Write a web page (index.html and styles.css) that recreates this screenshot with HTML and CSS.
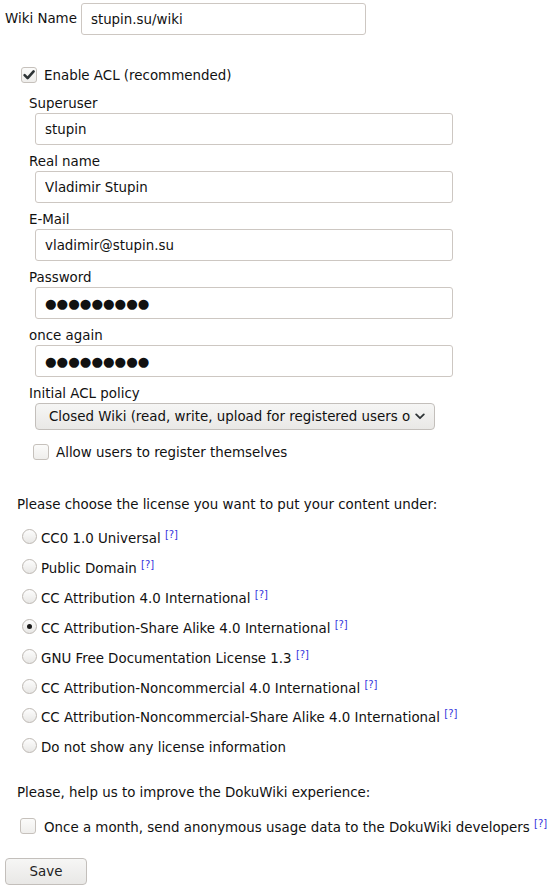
FILE: index.html
```html
<!DOCTYPE html>
<html lang="en">
<head>
<meta charset="utf-8">
<title>DokuWiki Installer</title>
<link rel="stylesheet" href="styles.css">
</head>
<body>
<form class="page">
  <div class="title-row">
    <label class="title-label" for="title">Wiki Name</label>
    <input class="field field-title" id="title" type="text" value="stupin.su/wiki">
  </div>

  <div class="acl">
    <label class="check-line acl-toggle">
      <span class="cb is-checked"><svg viewBox="0 0 16 16" width="16" height="16"><path d="M3.6 8.2 L6.6 11.2 L12.6 4.4" fill="none" stroke="#2e3436" stroke-width="2.6" stroke-linecap="round" stroke-linejoin="round"/></svg></span>
      <span>Enable ACL (recommended)</span>
    </label>
    <div class="acl-fields">
      <label class="lbl">Superuser</label>
      <input class="field" type="text" value="stupin">
      <label class="lbl">Real name</label>
      <input class="field" type="text" value="Vladimir Stupin">
      <label class="lbl">E-Mail</label>
      <input class="field" type="text" value="vladimir@stupin.su">
      <label class="lbl">Password</label>
      <input class="field field-pass" type="text" value="●●●●●●●●●">
      <label class="lbl">once again</label>
      <input class="field field-pass" type="text" value="●●●●●●●●●">
      <label class="lbl">Initial ACL policy</label>
      <div class="select">
        <span class="select-text">Closed Wiki (read, write, upload for registered users only)</span>
        <svg class="chev" viewBox="0 0 10 7" width="10" height="7"><path d="M1.2 1.4 L5 5.2 L8.8 1.4" fill="none" stroke="#2e3436" stroke-width="1.8" stroke-linecap="round" stroke-linejoin="round"/></svg>
      </div>
      <label class="check-line allow">
        <span class="cb"></span>
        <span>Allow users to register themselves</span>
      </label>
    </div>
  </div>

  <p class="para para-license">Please choose the license you want to put your content under:</p>

  <div class="licenses">
    <label class="radio-line"><span class="radio"></span><span>CC0 1.0 Universal <sup class="help">[?]</sup></span></label>
    <label class="radio-line"><span class="radio"></span><span>Public Domain <sup class="help">[?]</sup></span></label>
    <label class="radio-line"><span class="radio"></span><span>CC Attribution 4.0 International <sup class="help">[?]</sup></span></label>
    <label class="radio-line"><span class="radio is-checked"></span><span>CC Attribution-Share Alike 4.0 International <sup class="help">[?]</sup></span></label>
    <label class="radio-line"><span class="radio"></span><span>GNU Free Documentation License 1.3 <sup class="help">[?]</sup></span></label>
    <label class="radio-line"><span class="radio"></span><span>CC Attribution-Noncommercial 4.0 International <sup class="help">[?]</sup></span></label>
    <label class="radio-line"><span class="radio"></span><span>CC Attribution-Noncommercial-Share Alike 4.0 International <sup class="help">[?]</sup></span></label>
    <label class="radio-line"><span class="radio"></span><span>Do not show any license information</span></label>
  </div>

  <p class="para para-help">Please, help us to improve the DokuWiki experience:</p>

  <label class="check-line pop">
    <span class="cb"></span>
    <span>Once a month, send anonymous usage data to the DokuWiki developers <sup class="help">[?]</sup></span>
  </label>

  <div class="actions">
    <button class="btn" type="button">Save</button>
  </div>
</form>
</body>
</html>
```

FILE: styles.css
```css
html, body {
  margin: 0;
  padding: 0;
  background: #ffffff;
}

body {
  font-family: "DejaVu Sans", "Liberation Sans", sans-serif;
  font-size: 13.4px;
  color: #111111;
}

.page {
  display: flex;
  flex-direction: column;
  padding: 3px 0 0 0;
  margin: 0;
}

.title-row {
  display: flex;
  align-items: center;
  gap: 4px;
  padding-left: 5px;
}

.title-label {
  line-height: 16px;
}

.field {
  box-sizing: border-box;
  height: 32px;
  padding: 0 9px;
  border: 1px solid #cdc7c2;
  border-radius: 3px;
  background: #ffffff;
  font-family: "DejaVu Sans", "Liberation Sans", sans-serif;
  font-size: 13.4px;
  color: #111111;
  outline: none;
  margin: 0;
}

.field-title {
  width: 285px;
}

.field-pass {
  font-size: 13.3px;
  padding-left: 9px;
}

.acl {
  display: flex;
  flex-direction: column;
  margin-top: 32px;
}

.check-line {
  display: flex;
  align-items: center;
  line-height: 18px;
}

.acl-toggle {
  padding-left: 21px;
  gap: 7px;
}

.cb {
  box-sizing: border-box;
  width: 16px;
  height: 16px;
  border: 1px solid #c6c1bc;
  border-radius: 3px;
  background: linear-gradient(#fbfbfa, #efeeec);
  display: flex;
  align-items: center;
  justify-content: center;
  flex: none;
}

.acl-toggle .cb {
  margin-top: -3px;
}

.cb svg {
  display: block;
  margin: -1px;
}

.acl-fields {
  display: flex;
  flex-direction: column;
  align-items: flex-start;
  padding-left: 29px;
  margin-top: 11px;
}

.lbl {
  line-height: 16px;
  margin-top: 9px;
}

.lbl:first-child {
  margin-top: 0;
}

.acl-fields .field {
  margin-top: 1px;
  margin-left: 6px;
  width: 418px;
}

.select {
  box-sizing: border-box;
  margin-top: 1px;
  margin-left: 6px;
  width: 400px;
  height: 27px;
  border: 1px solid #c3bfbb;
  border-radius: 4px;
  background: linear-gradient(#f6f6f5, #e9e8e6);
  display: flex;
  align-items: center;
  padding: 0 9px 0 13px;
  gap: 4px;
}

.select-text {
  flex: 1;
  white-space: nowrap;
  overflow: hidden;
  line-height: 16px;
}

.chev {
  flex: none;
  display: block;
}

.allow {
  margin-top: 14px;
  margin-left: 4px;
  gap: 7px;
}

.allow .cb {
  margin-top: -3px;
}

.para {
  margin: 35px 0 0 17px;
  line-height: 16px;
}

.licenses {
  display: flex;
  flex-direction: column;
  margin-top: 11px;
  padding-left: 22px;
}

.radio-line {
  display: flex;
  align-items: center;
  height: 29.85px;
  gap: 4px;
}

.radio {
  box-sizing: border-box;
  width: 15px;
  height: 15px;
  border: 1px solid #bdb8b3;
  border-radius: 50%;
  background: linear-gradient(#fdfdfd, #e8e7e5);
  margin-top: -4px;
  flex: none;
  display: flex;
  align-items: center;
  justify-content: center;
}

.radio.is-checked::after {
  content: "";
  width: 5px;
  height: 5px;
  border-radius: 50%;
  background: #1a1a1a;
}

.help {
  font-size: 10px;
  color: #3434dd;
  vertical-align: 5px;
  line-height: 0;
}

.para-help {
  margin-top: 22px;
}

.pop {
  margin-top: 18px;
  padding-left: 20px;
  gap: 8px;
}

.pop .cb {
  margin-top: -3px;
}

.actions {
  display: flex;
  padding-left: 5px;
  margin-top: 21px;
}

.btn {
  box-sizing: border-box;
  width: 82px;
  height: 27px;
  border: 1px solid #c3bfbb;
  border-radius: 4px;
  background: linear-gradient(#f6f6f5, #e9e8e6);
  font-family: "DejaVu Sans", "Liberation Sans", sans-serif;
  font-size: 13.4px;
  color: #222222;
  padding: 0;
}
```
